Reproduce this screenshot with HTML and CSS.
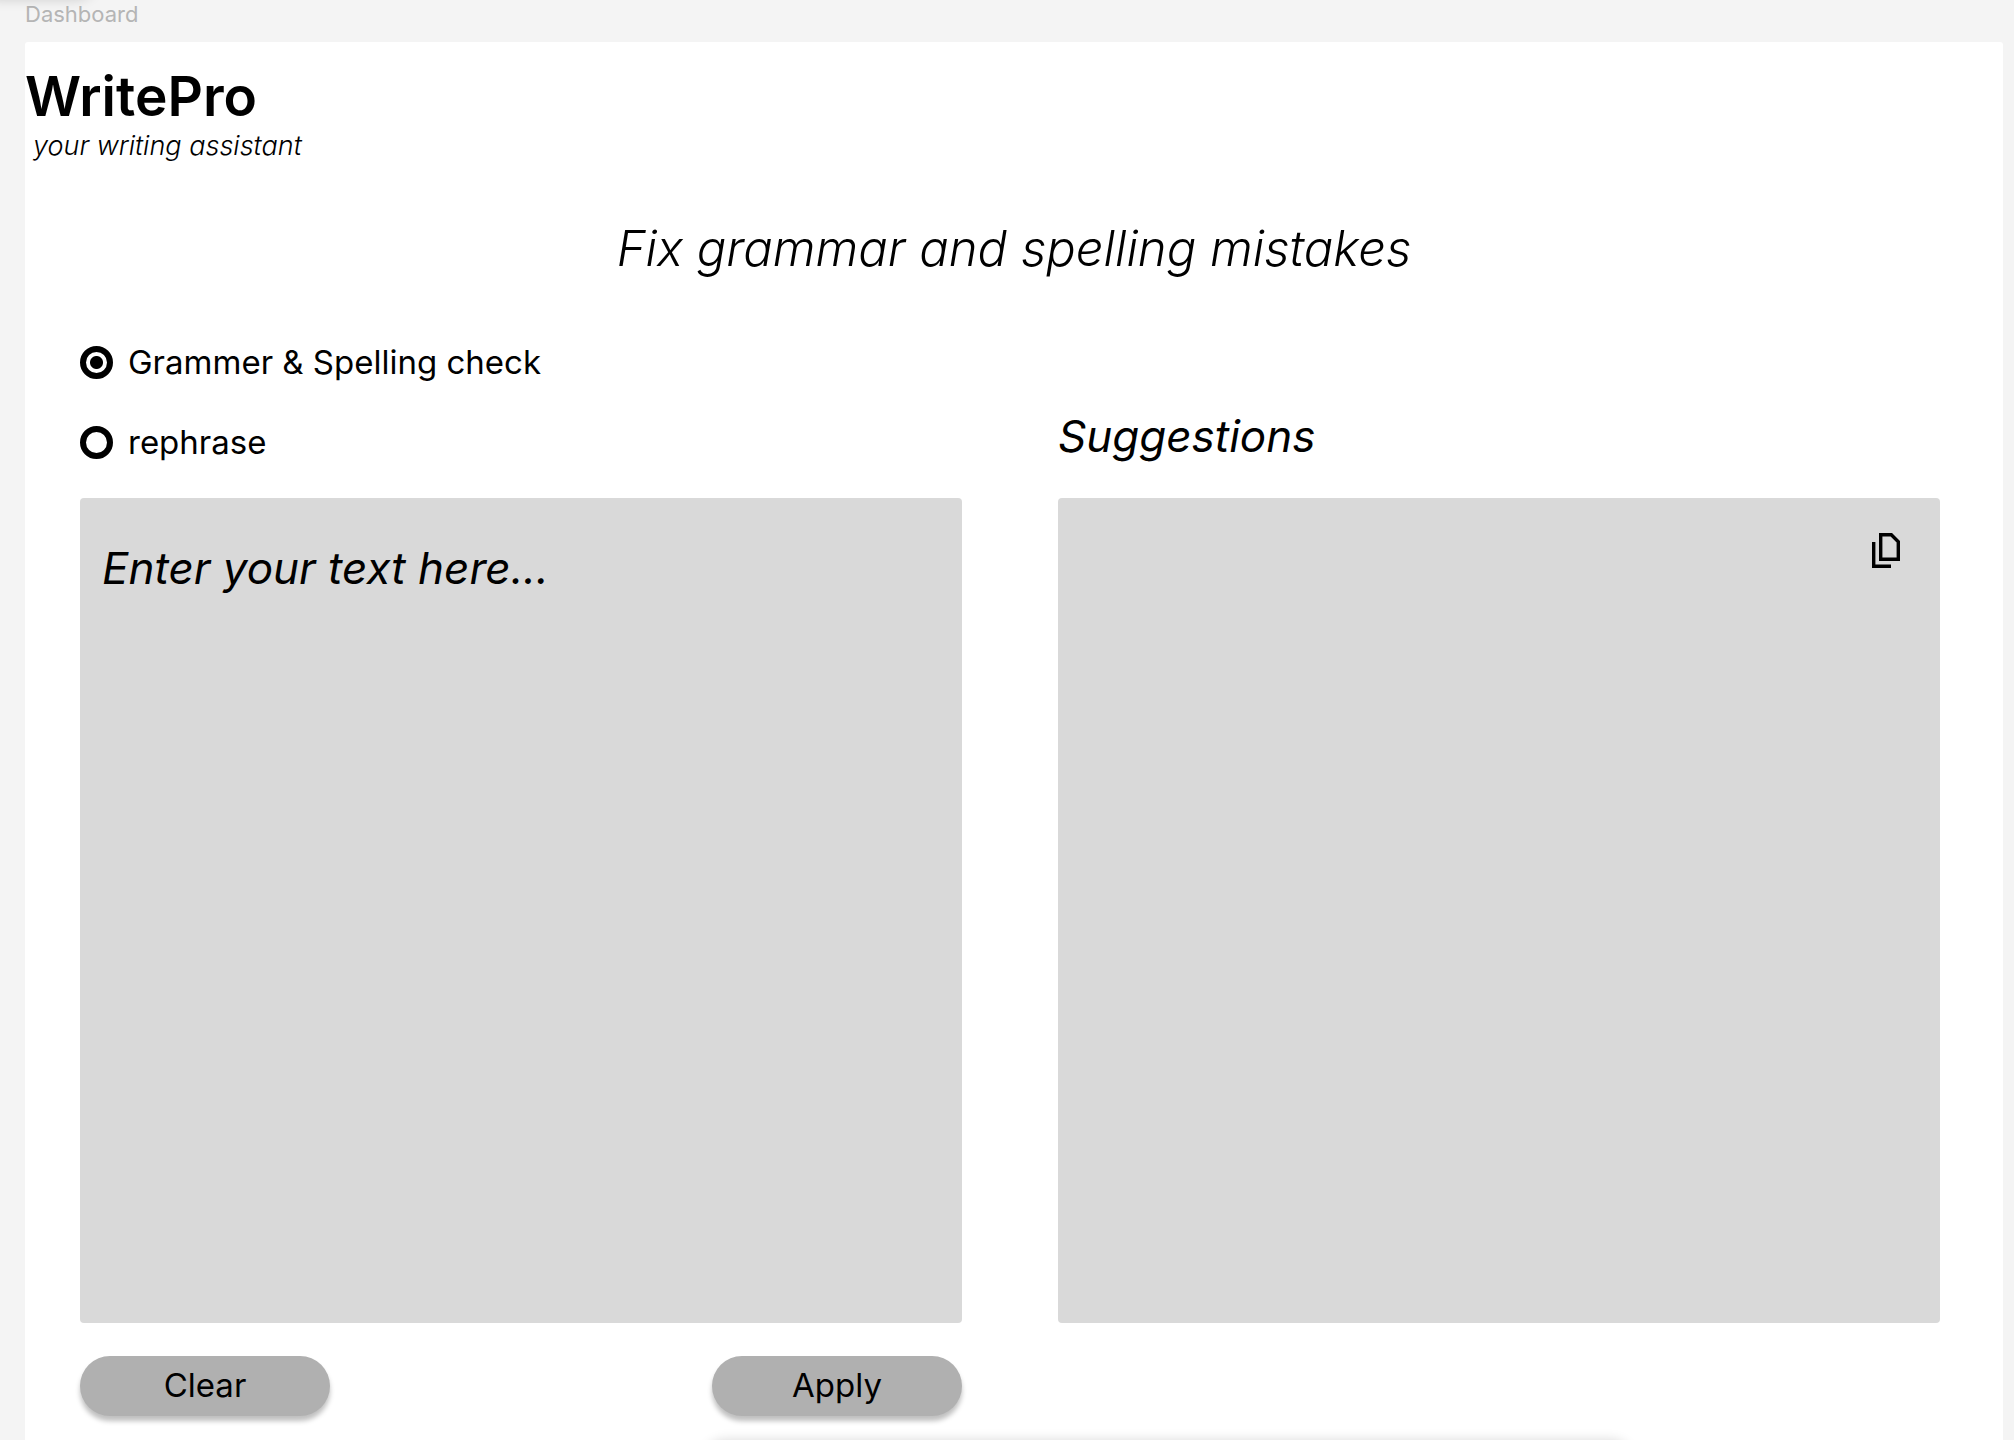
FILE: index.html
```html
<!DOCTYPE html>
<html lang="en">
<head>
<meta charset="utf-8">
<meta name="viewport" content="width=device-width, initial-scale=1">
<title>WritePro</title>
<link rel="stylesheet" href="styles.css">
</head>
<body>
<div class="canvas">
  <div class="frame-label">Dashboard</div>
  <main class="frame">
    <header class="brand">
      <h1 class="brand-name">WritePro</h1>
      <p class="brand-tagline">your writing assistant</p>
    </header>
    <h2 class="headline">Fix grammar and spelling mistakes</h2>
    <form class="workspace">
      <div class="modes" role="radiogroup" aria-label="Mode">
        <label class="mode"><input class="mode-radio" type="radio" name="mode" value="check" checked>Grammer &amp; Spelling check</label>
        <label class="mode"><input class="mode-radio" type="radio" name="mode" value="rephrase">rephrase</label>
      </div>
      <h3 class="suggestions-title" id="suggestions-title">Suggestions</h3>
      <textarea class="panel editor" aria-label="Your text" placeholder="Enter your text here..."></textarea>
      <section class="panel output" aria-labelledby="suggestions-title">
        <button class="copy" type="button" aria-label="Copy">
          <svg class="copy-icon" viewBox="0 0 28 35" aria-hidden="true">
            <path d="M8.700 1.700h10.600l7 7v17.600H8.700zM1.700 9v24.300H19" fill="none" stroke="#000" stroke-width="3.400"/>
          </svg>
        </button>
      </section>
      <div class="actions">
        <button class="action" type="reset">Clear</button>
        <button class="action" type="button">Apply</button>
      </div>
    </form>
  </main>
</div>
<div class="edge-shadow edge-shadow-top"></div>
<div class="edge-shadow edge-shadow-bottom"></div>
</body>
</html>
```
FILE: styles.css
```css
* {
  box-sizing: border-box;
}

body {
  margin: 0;
  background: #f4f4f4;
  color: #000;
  font-family: Inter, "Liberation Sans", sans-serif;
  font-optical-sizing: none;
}

h1, h2, h3, p {
  margin: 0;
}

.canvas {
  display: flex;
  flex-direction: column;
  min-height: 100vh;
  padding: 0 11px 0 25px;
}

.frame-label {
  height: 42px;
  color: #b5b5b5;
  font-size: 22px;
  line-height: 28px;
}

.frame {
  display: flex;
  flex: 1;
  flex-direction: column;
  padding: 22px 0 24px;
  border-radius: 3px 3px 0 0;
  background: #fff;
}

.brand-name {
  font-size: 55px;
  font-weight: 600;
  line-height: 64px;
}

.brand-tagline {
  padding-left: 8px;
  font-size: 27px;
  font-style: italic;
  font-weight: 300;
  line-height: 36px;
}

.headline {
  margin: 55px 0 63px;
  font-size: 49px;
  font-style: italic;
  font-weight: 300;
  line-height: 60px;
  text-align: center;
}

.workspace {
  display: grid;
  flex: 1;
  grid-template-columns: 1fr 1fr;
  grid-template-rows: auto 1fr auto;
  column-gap: 96px;
  padding: 0 63px 0 55px;
}

.modes {
  display: flex;
  flex-direction: column;
  gap: 40px;
  padding-bottom: 36px;
}

.mode {
  display: flex;
  align-items: center;
  gap: 15px;
  font-size: 33px;
  line-height: 40px;
}

.mode-radio {
  flex: none;
  width: 33px;
  height: 33px;
  margin: 0;
  border: 6px solid #000;
  border-radius: 50%;
  appearance: none;
  background: #fff;
}

.mode-radio:checked {
  background: radial-gradient(circle, #000 6px, #fff 7px);
}

.suggestions-title {
  align-self: end;
  padding-bottom: 34px;
  font-size: 44px;
  font-style: italic;
  font-weight: 400;
  line-height: 56px;
}

.panel {
  min-height: 320px;
  border: 0;
  border-radius: 4px;
  background: #d9d9d9;
}

.editor {
  display: block;
  width: 100%;
  padding: 42px 22px;
  color: #000;
  font: italic 400 44px/56px Inter, "Liberation Sans", sans-serif;
  font-optical-sizing: none;
  resize: none;
}

.editor::placeholder {
  color: #000;
  opacity: 1;
}

.output {
  display: flex;
  align-items: flex-start;
  justify-content: flex-end;
  padding: 35px 40px;
}

.copy {
  padding: 0;
  border: 0;
  background: none;
}

.copy-icon {
  display: block;
  width: 28px;
  height: 35px;
}

.actions {
  display: flex;
  justify-content: space-between;
  padding-top: 33px;
}

.action {
  width: 250px;
  height: 60px;
  padding: 0 0 2px;
  border: 0;
  border-radius: 30px;
  background: #b0b0b0;
  box-shadow: 0 5px 5px rgba(0, 0, 0, 0.25);
  color: #000;
  font: 400 33px/40px Inter, "Liberation Sans", sans-serif;
  font-optical-sizing: none;
}

/* Shadows of the floating toolbars just outside the viewport */
.edge-shadow {
  position: fixed;
  height: 40px;
  border-radius: 20px;
  box-shadow: 0 0 12px rgba(0, 0, 0, 0.15);
  pointer-events: none;
}

.edge-shadow-top {
  bottom: 100%;
  left: -20px;
  width: 116px;
}

.edge-shadow-bottom {
  top: 100%;
  right: 19%;
  left: 35%;
}
```
